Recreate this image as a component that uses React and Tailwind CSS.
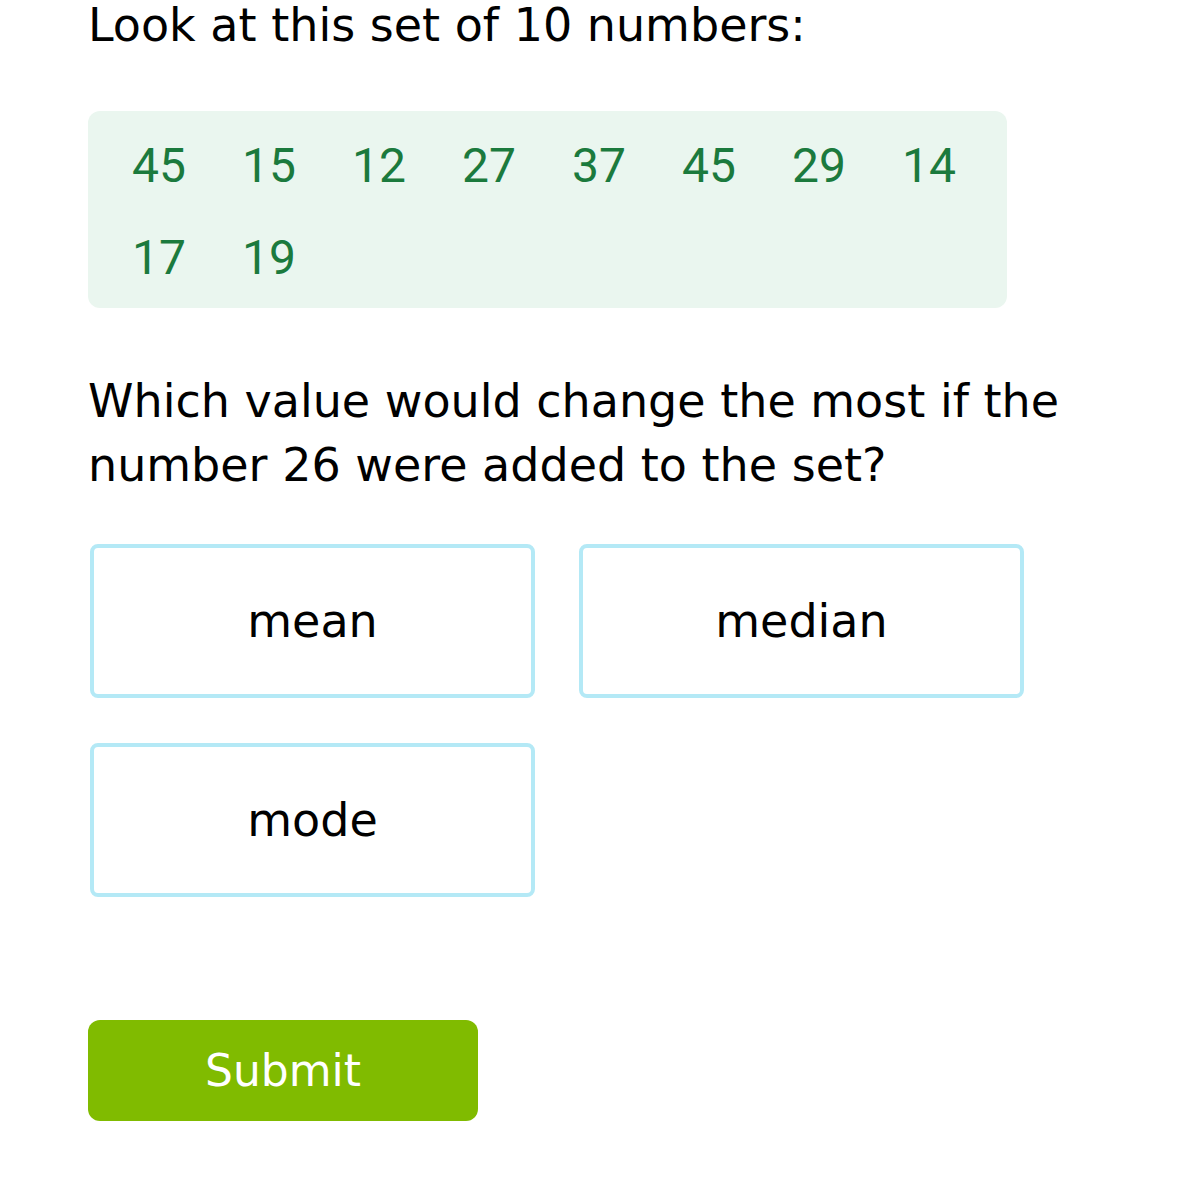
import React from 'react';

const numbers = [45, 15, 12, 27, 37, 45, 29, 14, 17, 19];
const choices = ['mean', 'median', 'mode'];

export default function App() {
  return (
    <div className="min-h-screen bg-white pl-[88px] text-black" style={{ fontFamily: '"DejaVu Sans", Verdana, sans-serif' }}>
      <p className="text-[46px] leading-[50px]">Look at this set of 10 numbers:</p>

      {/* numbers */}
      <div className="mt-[61px] w-[919px] rounded-[12px] bg-[#eaf6ef] pl-[44px] pt-[9px] pb-[4px]">
        <div className="grid grid-cols-[repeat(8,110px)]">
          {numbers.map((n, i) => (
            <span key={i} className="h-[92px] text-[48px] leading-[92px] text-[#1b7a3d]" style={{ fontFamily: 'Roboto, sans-serif' }}>
              {n}
            </span>
          ))}
        </div>
      </div>

      <p className="mt-[61px] text-[46px] leading-[64px]">
        Which value would change the most if the
        <br />
        number 26 were added to the set?
      </p>

      {/* answer choices */}
      <div className="mt-[47px] ml-[2px] grid grid-cols-[445px_445px] gap-x-[44px] gap-y-[45px]">
        {choices.map((c) => (
          <div key={c} className="flex h-[154px] items-center justify-center rounded-[8px] border-[4px] border-[#b4e9f6] bg-white text-[46px]">
            {c}
          </div>
        ))}
      </div>

      <button className="mt-[123px] flex h-[101px] w-[390px] items-center justify-center rounded-[12px] bg-[#80bb00] text-[44px] text-white">
        Submit
      </button>
    </div>
  );
}
